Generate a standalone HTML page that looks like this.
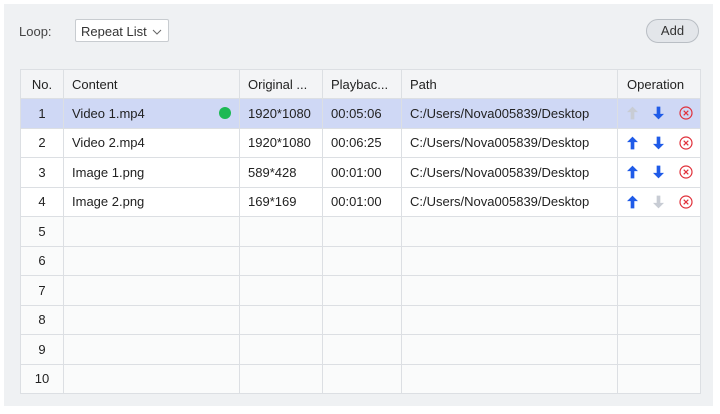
<!DOCTYPE html>
<html><head><meta charset="utf-8"><style>
*{margin:0;padding:0;box-sizing:border-box}
body{width:720px;height:414px;background:#fff;font-family:"Liberation Sans","Noto Sans CJK SC",sans-serif;font-size:13px;color:#222;position:relative;overflow:hidden}
.panel{position:absolute;left:4px;top:4px;width:709px;height:402px;background:#eff1f3}
.loop{position:absolute;left:19px;top:24px;color:#444}
.sel{position:absolute;left:75px;top:19px;width:94px;height:23px;background:#fff;border:1px solid #c8ccd0;border-radius:2px;padding:4px 0 0 5px;color:#333}
.add{position:absolute;left:646px;top:19px;width:53px;height:24px;border:1px solid #b9bec4;border-radius:12px;background:#e3e6ea;text-align:center;line-height:22px;color:#333}
table{position:absolute;left:20px;top:69px;width:680px;border-collapse:collapse;table-layout:fixed}
td,th{border:1px solid #dcdfe3;height:29.5px;padding:0 8px;white-space:nowrap;overflow:hidden;font-weight:normal;text-align:left}
th{background:#f3f4f6;height:29px}
tr.f td{background:#fff}
tr.e td{background:#fafbfb}
tr.s td{background:#cfd8f5}
td.n,th.n{text-align:center;padding:0}
td.o{padding:0 0 0 9px}
.ops{display:flex;align-items:center;width:75px}
.ops svg{margin-right:15px;flex-shrink:0}
.ops svg:last-child{margin-right:0}
</style></head><body>
<div class="panel"></div>
<div class="loop">Loop:</div>
<div class="sel">Repeat List <svg width="10" height="7" style="margin-left:2px" viewBox="0 0 10 7"><path d="M1 1L5 5L9 1" stroke="#666" fill="none"/></svg></div>
<div class="add">Add</div>
<table>
<colgroup><col style="width:43px"><col style="width:176px"><col style="width:83px"><col style="width:79px"><col style="width:216px"><col style="width:83px"></colgroup>
<tr><th class="n">No.</th><th>Content</th><th>Original ...</th><th>Playbac...</th><th>Path</th><th style="padding-left:9px">Operation</th></tr>
<tr class="s"><td class="n">1</td><td>Video 1.mp4<span style="float:right;width:12px;height:12px;border-radius:6px;background:#1db954;margin-top:1px"></span></td><td>1920*1080</td><td>00:05:06</td><td>C:/Users/Nova005839/Desktop</td><td class="o"><div class="ops">
<svg width="11" height="14" viewBox="0 0 12 14"><path d="M6 0L12 6H8V14H4V6H0Z" fill="#c8ccd4"/></svg>
<svg width="11" height="14" viewBox="0 0 12 14"><path d="M6 14L12 8H8V0H4V8H0Z" fill="#1f5be8"/></svg>
<svg width="14" height="14" viewBox="0 0 14 14"><circle cx="7" cy="7" r="6" fill="none" stroke="#e0303a" stroke-width="1.2"/><path d="M4.7 4.7L9.3 9.3M9.3 4.7L4.7 9.3" stroke="#e0303a" stroke-width="1.2"/></svg></div></td></tr>
<tr class="f"><td class="n">2</td><td>Video 2.mp4</td><td>1920*1080</td><td>00:06:25</td><td>C:/Users/Nova005839/Desktop</td><td class="o"><div class="ops">
<svg width="11" height="14" viewBox="0 0 12 14"><path d="M6 0L12 6H8V14H4V6H0Z" fill="#1f5be8"/></svg>
<svg width="11" height="14" viewBox="0 0 12 14"><path d="M6 14L12 8H8V0H4V8H0Z" fill="#1f5be8"/></svg>
<svg width="14" height="14" viewBox="0 0 14 14"><circle cx="7" cy="7" r="6" fill="none" stroke="#e0303a" stroke-width="1.2"/><path d="M4.7 4.7L9.3 9.3M9.3 4.7L4.7 9.3" stroke="#e0303a" stroke-width="1.2"/></svg></div></td></tr>
<tr class="f"><td class="n">3</td><td>Image 1.png</td><td>589*428</td><td>00:01:00</td><td>C:/Users/Nova005839/Desktop</td><td class="o"><div class="ops">
<svg width="11" height="14" viewBox="0 0 12 14"><path d="M6 0L12 6H8V14H4V6H0Z" fill="#1f5be8"/></svg>
<svg width="11" height="14" viewBox="0 0 12 14"><path d="M6 14L12 8H8V0H4V8H0Z" fill="#1f5be8"/></svg>
<svg width="14" height="14" viewBox="0 0 14 14"><circle cx="7" cy="7" r="6" fill="none" stroke="#e0303a" stroke-width="1.2"/><path d="M4.7 4.7L9.3 9.3M9.3 4.7L4.7 9.3" stroke="#e0303a" stroke-width="1.2"/></svg></div></td></tr>
<tr class="f"><td class="n">4</td><td>Image 2.png</td><td>169*169</td><td>00:01:00</td><td>C:/Users/Nova005839/Desktop</td><td class="o"><div class="ops">
<svg width="11" height="14" viewBox="0 0 12 14"><path d="M6 0L12 6H8V14H4V6H0Z" fill="#1f5be8"/></svg>
<svg width="11" height="14" viewBox="0 0 12 14"><path d="M6 14L12 8H8V0H4V8H0Z" fill="#c8ccd4"/></svg>
<svg width="14" height="14" viewBox="0 0 14 14"><circle cx="7" cy="7" r="6" fill="none" stroke="#e0303a" stroke-width="1.2"/><path d="M4.7 4.7L9.3 9.3M9.3 4.7L4.7 9.3" stroke="#e0303a" stroke-width="1.2"/></svg></div></td></tr>
<tr class="e"><td class="n">5</td><td></td><td></td><td></td><td></td><td></td></tr>
<tr class="e"><td class="n">6</td><td></td><td></td><td></td><td></td><td></td></tr>
<tr class="e"><td class="n">7</td><td></td><td></td><td></td><td></td><td></td></tr>
<tr class="e"><td class="n">8</td><td></td><td></td><td></td><td></td><td></td></tr>
<tr class="e"><td class="n">9</td><td></td><td></td><td></td><td></td><td></td></tr>
<tr class="e"><td class="n">10</td><td></td><td></td><td></td><td></td><td></td></tr>
</table>
</body></html>
